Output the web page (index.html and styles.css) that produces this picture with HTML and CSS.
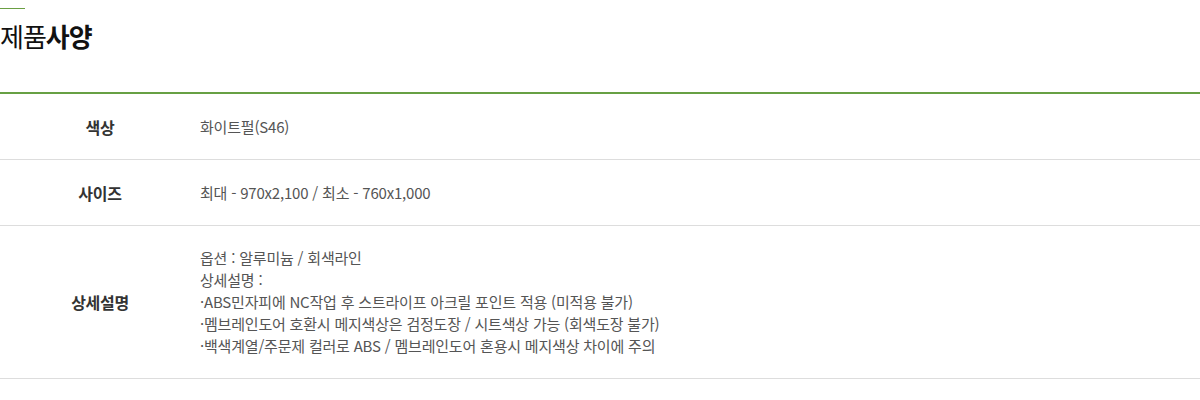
FILE: index.html
```html
<!DOCTYPE html>
<html lang="ko">
<head>
<meta charset="utf-8">
<link rel="stylesheet" href="styles.css">
</head>
<body>
<section class="spec">
  <div class="title-bar"></div>
  <h2 class="title">제품<strong>사양</strong></h2>
  <div class="table">
    <div class="row">
      <div class="label">색상</div>
      <div class="value">화이트펄(S46)</div>
    </div>
    <div class="row">
      <div class="label">사이즈</div>
      <div class="value">최대 - 970x2,100 / 최소 - 760x1,000</div>
    </div>
    <div class="row row-tall">
      <div class="label">상세설명</div>
      <div class="value">
        <p>옵션 : 알루미늄 / 회색라인</p>
        <p>상세설명 :</p>
        <p>·ABS민자피에 NC작업 후 스트라이프 아크릴 포인트 적용 (미적용 불가)</p>
        <p>·멤브레인도어 호환시 메지색상은 검정도장 / 시트색상 가능 (회색도장 불가)</p>
        <p>·백색계열/주문제 컬러로 ABS / 멤브레인도어 혼용시 메지색상 차이에 주의</p>
      </div>
    </div>
  </div>
</section>
</body>
</html>
```

FILE: styles.css
```css
* { box-sizing: border-box; }
html, body { margin: 0; padding: 0; background: #fff; }
body {
  font-family: "Noto Sans CJK KR", "Noto Sans", sans-serif;
  color: #333;
}
.spec { padding-top: 8px; }
.title-bar {
  width: 25px;
  height: 1px;
  background: #6a9f43;
}
.title {
  margin: 0;
  padding-top: 10px;
  font-size: 26px;
  line-height: 34px;
  font-weight: 400;
  color: #111;
  letter-spacing: -1px;
}
.title strong { font-weight: 700; }
.table {
  margin-top: 39px;
  border-top: 2px solid #67a044;
}
.row {
  display: flex;
  align-items: center;
  height: 66px;
  border-bottom: 1px solid #ddd;
}
.row-tall { height: 153px; }
.label {
  width: 200px;
  text-align: center;
  font-size: 16px;
  font-weight: 700;
  color: #333;
  letter-spacing: -0.3px;
}
.value {
  font-size: 15px;
  color: #555;
  letter-spacing: -0.2px;
  line-height: 22px;
}
.value p { margin: 0; }
```
